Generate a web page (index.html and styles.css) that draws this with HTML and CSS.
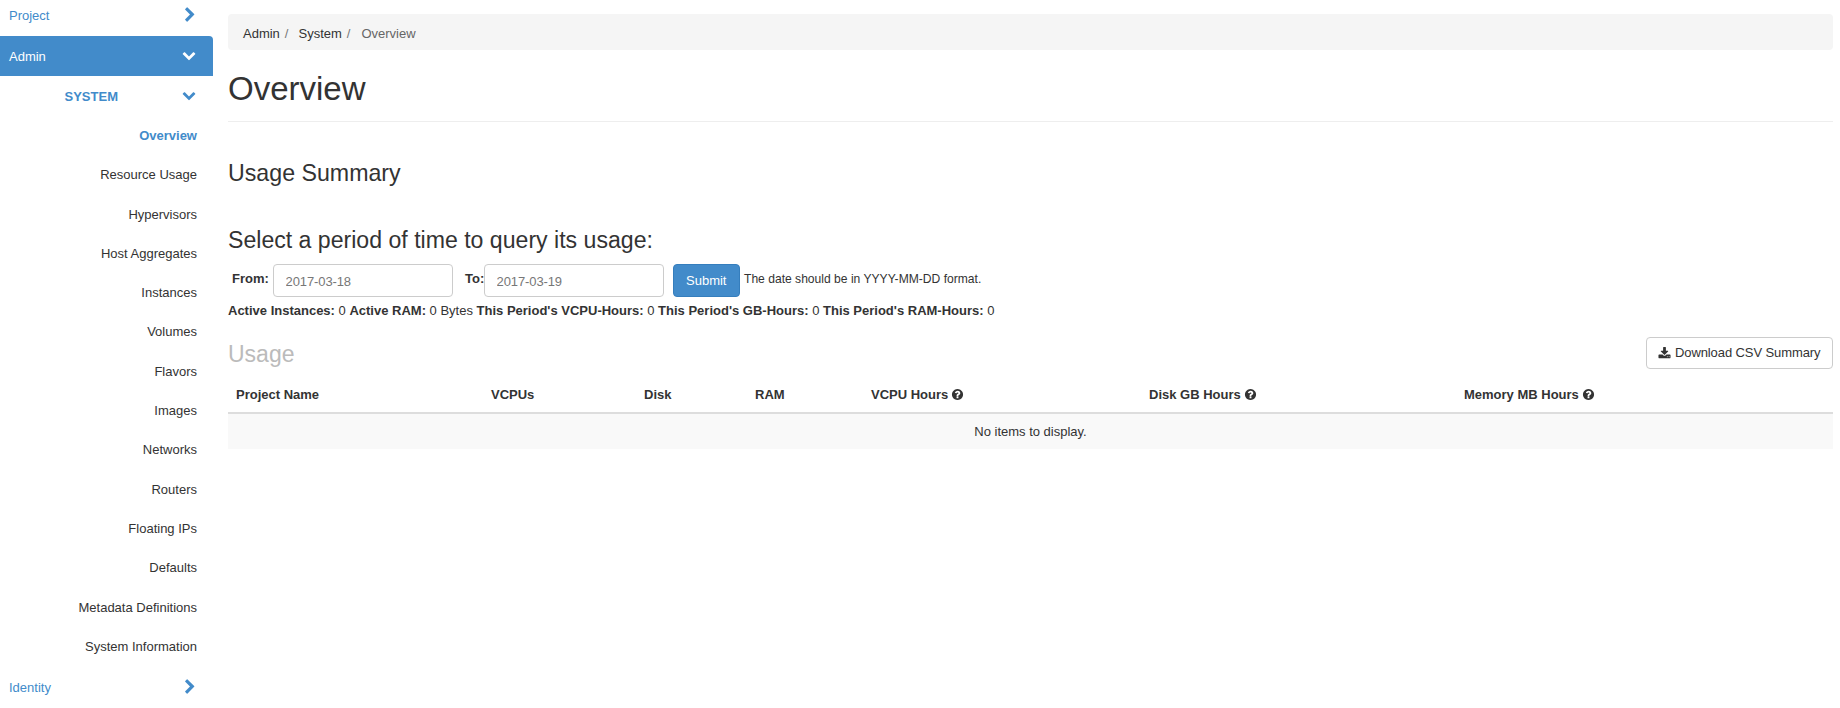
FILE: index.html
```html
<!DOCTYPE html>
<html lang="en">
<head>
<meta charset="utf-8">
<title>Usage Overview</title>
<link rel="stylesheet" href="styles.css">
</head>
<body>
<svg class="defs" aria-hidden="true">
  <symbol id="i-right" viewBox="0 0 1792 1792"><path d="M1363 877l-742 742q-19 19-45 19t-45-19l-166-166q-19-19-19-45t19-45l531-531-531-531q-19-19-19-45t19-45l166-166q19-19 45-19t45 19l742 742q19 19 19 45t-19 45z"/></symbol>
  <symbol id="i-down" viewBox="0 0 1792 1792"><path d="M1683 808l-742 741q-19 19-45 19t-45-19l-742-741q-19-19-19-45.5t19-45.5l166-165q19-19 45-19t45 19l531 531 531-531q19-19 45-19t45 19l166 165q19 19 19 45.5t-19 45.5z"/></symbol>
  <symbol id="i-help" viewBox="0 0 1792 1792"><path d="M1024 1376v-192q0-14-9-23t-23-9h-192q-14 0-23 9t-9 23v192q0 14 9 23t23 9h192q14 0 23-9t9-23zm256-672q0-88-55.5-163t-138.5-116-170-41q-243 0-371 213-15 24 8 42l132 100q7 6 19 6 16 0 25-12 53-68 86-92 34-24 86-24 48 0 85.5 26t37.5 59q0 38-20 61t-68 45q-63 28-115.5 86.5t-52.5 125.5v36q0 14 9 23t23 9h192q14 0 23-9t9-23q0-19 21.5-49.5t54.5-49.5q32-18 49-28.5t46-35 44.5-48 28-60.5 12.5-81zm384 192q0 209-103 385.5t-279.5 279.5-385.5 103-385.5-103-279.5-279.5-103-385.5 103-385.5 279.5-279.5 385.5-103 385.5 103 279.5 279.5 103 385.5z"/></symbol>
  <symbol id="i-download" viewBox="0 0 1792 1792"><path d="M1344 1344q0-26-19-45t-45-19-45 19-19 45 19 45 45 19 45-19 19-45zm256 0q0-26-19-45t-45-19-45 19-19 45 19 45 45 19 45-19 19-45zm128-224v320q0 40-28 68t-68 28h-1472q-40 0-68-28t-28-68v-320q0-40 28-68t68-28h465l135 136q58 56 136 56t136-56l136-136h464q40 0 68 28t28 68zm-325-569q17 41-14 70l-448 448q-18 19-45 19t-45-19l-448-448q-31-29-14-70 17-39 59-39h256v-448q0-26 19-45t45-19h256q26 0 45 19t19 45v448h256q42 0 59 39z"/></symbol>
</svg>
<div class="layout">
  <nav class="sidebar">
    <a class="dash dash-project" href="#"><span>Project</span><svg class="chev-right"><use href="#i-right"/></svg></a>
    <a class="dash dash-active" href="#"><span>Admin</span><svg class="chev-down"><use href="#i-down"/></svg></a>
    <a class="group" href="#"><span>SYSTEM</span><svg class="chev-down"><use href="#i-down"/></svg></a>
    <ul class="panels">
      <li><a class="panel current" href="#">Overview</a></li>
      <li><a class="panel" href="#">Resource Usage</a></li>
      <li><a class="panel" href="#">Hypervisors</a></li>
      <li><a class="panel" href="#">Host Aggregates</a></li>
      <li><a class="panel" href="#">Instances</a></li>
      <li><a class="panel" href="#">Volumes</a></li>
      <li><a class="panel" href="#">Flavors</a></li>
      <li><a class="panel" href="#">Images</a></li>
      <li><a class="panel" href="#">Networks</a></li>
      <li><a class="panel" href="#">Routers</a></li>
      <li><a class="panel" href="#">Floating IPs</a></li>
      <li><a class="panel" href="#">Defaults</a></li>
      <li><a class="panel" href="#">Metadata Definitions</a></li>
      <li><a class="panel" href="#">System Information</a></li>
    </ul>
    <a class="dash dash-identity" href="#"><span>Identity</span><svg class="chev-right"><use href="#i-right"/></svg></a>
  </nav>
  <main class="content">
    <ol class="breadcrumb">
      <li><a href="#">Admin</a><span class="sep">/</span></li>
      <li><a href="#">System</a><span class="sep">/</span></li>
      <li class="here">Overview</li>
    </ol>
    <h1 class="page-title">Overview</h1>
    <h2 class="summary-title">Usage Summary</h2>
    <h3 class="query-title">Select a period of time to query its usage:</h3>
    <form class="date-form">
      <label class="from-label" for="from">From:</label>
      <input class="date-input" id="from" type="text" value="2017-03-18">
      <label class="to-label" for="to">To:</label>
      <input class="date-input" id="to" type="text" value="2017-03-19">
      <button class="submit" type="button">Submit</button>
      <span class="help">The date should be in YYYY-MM-DD format.</span>
    </form>
    <p class="stats"><strong>Active Instances:</strong> 0 <strong>Active RAM:</strong> 0 Bytes <strong>This Period's VCPU-Hours:</strong> 0 <strong>This Period's GB-Hours:</strong> 0 <strong>This Period's RAM-Hours:</strong> 0</p>
    <div class="table-head">
      <h3 class="usage-title">Usage</h3>
      <button class="download" type="button"><svg class="dl-icon"><use href="#i-download"/></svg><span>Download CSV Summary</span></button>
    </div>
    <table class="usage-table">
      <colgroup><col class="c1"><col class="c2"><col class="c3"><col class="c4"><col class="c5"><col class="c6"><col class="c7"></colgroup>
      <thead>
        <tr>
          <th>Project Name</th><th>VCPUs</th><th>Disk</th><th>RAM</th>
          <th>VCPU Hours <svg class="help-icon"><use href="#i-help"/></svg></th>
          <th>Disk GB Hours <svg class="help-icon"><use href="#i-help"/></svg></th>
          <th>Memory MB Hours <svg class="help-icon"><use href="#i-help"/></svg></th>
        </tr>
      </thead>
      <tbody>
        <tr><td colspan="7">No items to display.</td></tr>
      </tbody>
    </table>
  </main>
</div>
</body>
</html>
```
FILE: styles.css
```css
* { box-sizing: border-box; }
html, body { margin: 0; height: 708px; overflow: hidden; background: #fff; }
body { font-family: "Liberation Sans", Arial, sans-serif; font-size: 13px; line-height: 18.57px; color: #333; }
a { text-decoration: none; color: inherit; }
.defs { display: none; }
.layout { display: flex; align-items: flex-start; gap: 15px; padding-right: 7px; }
.sidebar { flex: 0 0 213px; }
.dash { display: flex; justify-content: space-between; align-items: center; height: 40px; padding: 2px 15px 0 9px; color: #428bca; }
.dash-project { height: 36px; padding-top: 0; padding-bottom: 4px; }
.dash-active { background: #428bca; color: #fff; border-radius: 0 4px 0 0; padding-top: 3px; }
.dash-identity { margin-top: 1px; }
.chev-right { width: 16px; height: 16px; fill: currentColor; flex: none; margin-top: -3px; }
.chev-down { width: 14px; height: 14px; fill: currentColor; flex: none; margin-right: 2px; margin-top: -5px; }
.group { display: flex; justify-content: flex-end; align-items: center; gap: 64px; height: 39px; padding: 3px 15px 0 0; color: #428bca; font-weight: 700; }
.panels { list-style: none; margin: 1px 0 0; padding: 0; }
.panel { display: block; height: 39.3px; line-height: 39.3px; padding-right: 16px; text-align: right; }
.panel.current { color: #428bca; font-weight: 700; }
.content { flex: 1; min-width: 0; padding-top: 14px; }
.breadcrumb { display: flex; list-style: none; margin: 0; padding: 11px 15px 0; height: 36px; background: #f5f5f5; border-radius: 4px; }
.breadcrumb li { white-space: nowrap; }
.sep { padding: 0 5px; color: #777; }
.breadcrumb li + li { padding-left: 5px; }
.breadcrumb .here { color: #666; padding-left: 6px; }
.page-title { margin: 0; padding: 19px 0 12px; height: 72px; font-size: 33px; line-height: 40px; font-weight: 500; border-bottom: 1px solid #eee; }
.summary-title { margin: 0; padding-top: 36px; height: 84px; font-size: 23.2px; line-height: 30px; font-weight: 500; }
.query-title { margin: 0; padding-top: 20px; height: 58px; font-size: 23.1px; line-height: 28px; font-weight: 500; }
.date-form { display: flex; align-items: center; height: 33px; }
.from-label { font-weight: 700; margin-left: 4px; margin-right: 5px; width: 36px; position: relative; top: -1px; }
.to-label { font-weight: 700; margin-left: 12px; width: 19px; position: relative; top: -1px; }
.date-input { width: 180px; height: 33px; padding: 7px 12px 5px 11.5px; font: inherit; letter-spacing: -0.1px; color: #777; border: 1px solid #ccc; border-radius: 4px; background: #fff; }
.submit { margin-left: 9px; width: 66.5px; height: 33px; padding: 1px 0 0; font: inherit; color: #fff; background: #428bca; border: 1px solid #357ebd; border-radius: 4px; }
.help { margin-left: 4.5px; font-size: 12.1px; position: relative; top: -1px; }
.stats { margin: 5px 0 0; height: 20px; }
.table-head { display: flex; justify-content: space-between; align-items: center; height: 32px; margin-top: 15px; }
.usage-title { margin: 0; padding-top: 2px; font-size: 23px; line-height: 32px; font-weight: 500; color: #bbb; }
.download { display: flex; align-items: center; height: 32px; width: 187px; padding: 0 0 0 11px; font: inherit; letter-spacing: -0.1px; color: #333; background: #fff; border: 1px solid #ccc; border-radius: 4px; white-space: nowrap; }
.dl-icon { width: 13px; height: 13px; fill: currentColor; margin-right: 4px; flex: none; }
.usage-table { width: 100%; margin-top: 8px; border-collapse: separate; border-spacing: 0; table-layout: fixed; }
.c1 { width: 255px; } .c2 { width: 153px; } .c3 { width: 111px; } .c4 { width: 116px; } .c5 { width: 278px; } .c6 { width: 315px; } .c7 { width: 377px; }
.usage-table th { height: 37px; padding: 9px 8px 7px; text-align: left; font-weight: 700; border-bottom: 2px solid #ddd; }
.usage-table td { height: 35px; padding: 9px 8px 7px; text-align: center; background: #f9f9f9; }
.help-icon { width: 13px; height: 13px; fill: currentColor; vertical-align: -2px; margin-left: -0.5px; }
```
